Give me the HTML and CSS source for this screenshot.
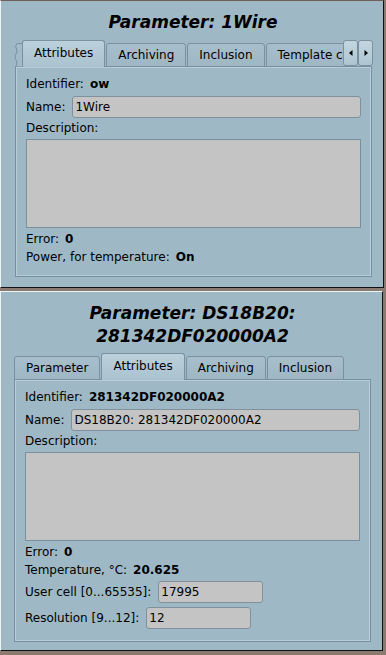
FILE: index.html
```html
<!DOCTYPE html>
<html>
<head>
<meta charset="utf-8">
<link rel="stylesheet" href="styles.css">
</head>
<body>
<div class="window w1">
  <div class="title">Parameter: 1Wire</div>
  <div class="tabbar">
    <div class="tabs clip">
      <div class="torn"><svg width="8" height="24" viewBox="0 0 8 24"><path d="M8.5 0.5 L3 0.5 Q0.5 3 2.5 6 Q4 9 1.5 12 Q0 15 2.5 18 Q4 21 1.5 24 L8.5 24 Z" fill="#a3bac7" stroke="#7a92a0" stroke-width="1"/></svg></div>
      <div class="tab active">Attributes</div>
      <div class="tab">Archiving</div>
      <div class="tab">Inclusion</div>
      <div class="tab">Template config</div>
    </div>
    <div class="scroll">
      <div class="sbtn"><svg width="6" height="8" viewBox="0 0 6 8"><path d="M4.5 1 L1 4 L4.5 7 Z" fill="#000"/></svg></div>
      <div class="sbtn"><svg width="6" height="8" viewBox="0 0 6 8"><path d="M1.5 1 L5 4 L1.5 7 Z" fill="#000"/></svg></div>
    </div>
  </div>
  <div class="pane">
    <div class="row tall"><span>Identifier:</span><b>ow</b></div>
    <div class="frow"><span>Name:</span><input class="field grow" value="1Wire"></div>
    <div class="desc">Description:</div>
    <textarea class="area"></textarea>
    <div class="row first"><span>Error:</span><b>0</b></div>
    <div class="row"><span>Power, for temperature:</span><b>On</b></div>
  </div>
</div>
<div class="window w2">
  <div class="title">Parameter: DS18B20:<br>281342DF020000A2</div>
  <div class="tabbar">
    <div class="tabs">
      <div class="tab">Parameter</div>
      <div class="tab active">Attributes</div>
      <div class="tab">Archiving</div>
      <div class="tab">Inclusion</div>
    </div>
  </div>
  <div class="pane">
    <div class="row tall"><span>Identifier:</span><b>281342DF020000A2</b></div>
    <div class="frow"><span>Name:</span><input class="field grow" value="DS18B20: 281342DF020000A2"></div>
    <div class="desc">Description:</div>
    <textarea class="area"></textarea>
    <div class="row first"><span>Error:</span><b>0</b></div>
    <div class="row"><span>Temperature, °C:</span><b>20.625</b></div>
    <div class="frow"><span>User cell [0...65535]:</span><input class="field small" value="17995"></div>
    <div class="frow gap4"><span>Resolution [9...12]:</span><input class="field small" value="12"></div>
  </div>
</div>
</body>
</html>
```
FILE: styles.css
```css
html, body {
  margin: 0;
  padding: 0;
}
body {
  width: 386px;
  height: 655px;
  background: #8b7a6f;
  font-family: "DejaVu Sans", sans-serif;
  font-size: 12px;
  color: #000;
  display: flex;
  flex-direction: column;
  gap: 3px;
  overflow: hidden;
}
.window {
  box-sizing: border-box;
  background: #9fb8c6;
  border: 1px solid;
  border-color: #eef3f5 #111 #111 #eef3f5;
  padding: 10px 11px 0 13px;
  display: flex;
  flex-direction: column;
}
.w1 {
  width: 384px;
  height: 288px;
  border-top-color: #6e5f57;
}
.w2 {
  width: 383px;
  height: 360px;
}
.title {
  font-weight: bold;
  font-style: italic;
  font-size: 17px;
  line-height: 23px;
  text-align: center;
}
.tabbar {
  display: flex;
  align-items: flex-end;
  height: 27px;
  margin-top: 6px;
  margin-bottom: -1px;
  position: relative;
  z-index: 1;
}
.w2 .tabbar {
  margin-top: 5px;
}
.tabs {
  display: flex;
  align-items: flex-end;
  gap: 1px;
  height: 27px;
}
.tabs.clip {
  width: 329px;
  overflow: hidden;
  flex: none;
}
.torn {
  height: 24px;
  width: 8px;
  flex: none;
  margin-right: -1px;
}
.torn svg {
  display: block;
}
.tab {
  box-sizing: border-box;
  flex: none;
  height: 24px;
  padding: 0 11px;
  border: 1px solid #7a92a0;
  border-radius: 3px 3px 0 0;
  background: linear-gradient(#a7bfcc, #9fb6c3);
  display: flex;
  align-items: center;
  white-space: nowrap;
}
.tab.active {
  height: 27px;
  padding-bottom: 3px;
  border-bottom: none;
  background: linear-gradient(#bbd1dc, #aac2cf);
}
.scroll {
  display: flex;
  align-self: flex-start;
  flex: none;
}
.sbtn {
  box-sizing: border-box;
  width: 15px;
  height: 26px;
  border: 1px solid #7a92a0;
  border-radius: 3px;
  background: linear-gradient(#c3d6e0, #aec5d1);
  display: flex;
  align-items: center;
  justify-content: center;
}
.sbtn svg {
  display: block;
}
.pane {
  box-sizing: border-box;
  border: 1px solid #7790a0;
  box-shadow: inset 0 0 0 1px #b9cdd7;
  padding: 7px 10px 10px 10px;
  display: flex;
  flex-direction: column;
}
.w1 .pane {
  margin-left: 1px;
}
.w2 .pane {
  padding-bottom: 12px;
}
.row {
  height: 18px;
  display: flex;
  align-items: center;
  gap: 6px;
  white-space: nowrap;
}
.row.tall {
  height: 20px;
}
.row.first {
  margin-top: 2px;
}
.row b {
  font-weight: bold;
}
.frow {
  height: 22px;
  margin-top: 2px;
  display: flex;
  align-items: center;
  gap: 7px;
  white-space: nowrap;
}
.frow.gap4 {
  margin-top: 4px;
}
.desc {
  height: 20px;
  display: flex;
  align-items: center;
}
.field {
  box-sizing: border-box;
  height: 22px;
  border: 1px solid #7f929c;
  border-radius: 3px;
  background: #c4c4c4;
  font-family: "DejaVu Sans", sans-serif;
  font-size: 12px;
  color: #000;
  padding: 0 2px;
  margin: 0;
  outline: none;
}
.field.grow {
  flex: 1;
  min-width: 0;
}
.field.small {
  width: 105px;
  flex: none;
}
.area {
  box-sizing: border-box;
  display: block;
  width: 100%;
  height: 89px;
  margin: 1px 0 0 0;
  border: 1px solid #7b909b;
  background: #c4c4c4;
  resize: none;
  padding: 0;
  outline: none;
}
```
